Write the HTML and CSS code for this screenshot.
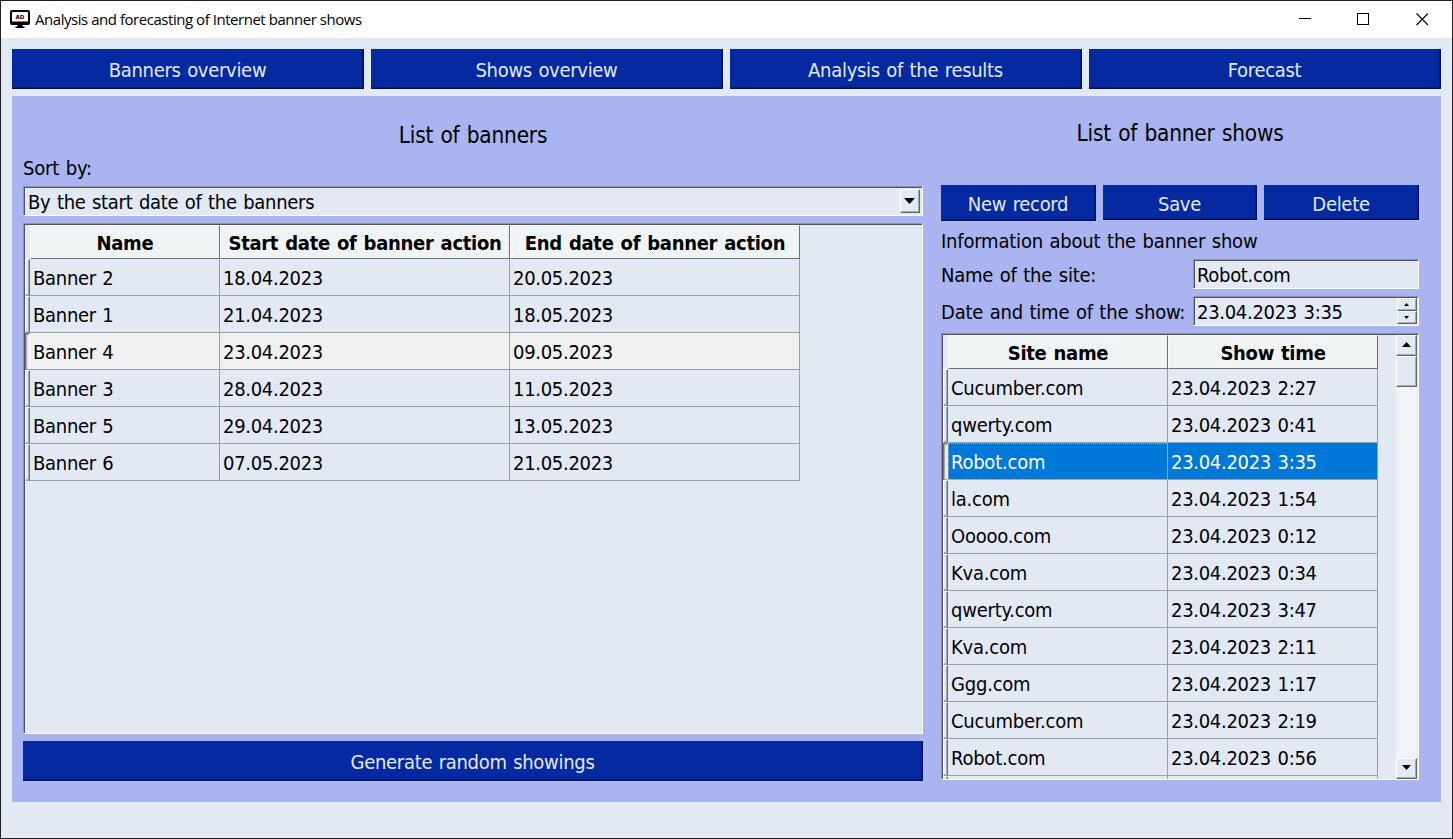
FILE: index.html
```html
<!DOCTYPE html>
<html lang="en">
<head>
<meta charset="utf-8">
<title>Analysis and forecasting of Internet banner shows</title>
<link rel="stylesheet" href="styles.css">
</head>
<body>
<div class="window">
  <header class="titlebar">
    <svg class="app-icon" width="20" height="19" viewBox="0 0 20 19">
      <rect x="1" y="1" width="18" height="13" rx="1" fill="#fff" stroke="#000" stroke-width="2"/>
      <path d="M1 11.500h18V14H1zM7.500 14h5v2.500h-5zM5.500 16.500h9v1.500h-9z" fill="#000"/>
      <text class="icon-text" x="10" y="8.600" text-anchor="middle">AD</text>
    </svg>
    <span class="title">Analysis and forecasting of Internet banner shows</span>
    <svg class="controls" width="142" height="37" viewBox="0 0 142 37" fill="none" stroke="#000" shape-rendering="crispEdges">
      <path d="M-1 17.500h12"/>
      <rect x="57.500" y="12.500" width="11" height="11"/>
      <path d="M116.500 12.500l11.500 11.500M128 12.500L116.500 24" shape-rendering="auto" stroke-width="1.100"/>
    </svg>
  </header>

  <nav class="tabs">
    <button class="btn">Banners overview</button>
    <button class="btn">Shows overview</button>
    <button class="btn">Analysis of the results</button>
    <button class="btn">Forecast</button>
  </nav>

  <main class="panel">
    <section class="banners">
      <h1 class="heading">List of banners</h1>
      <div class="sort-label">Sort by:</div>
      <div class="combo sunken">
        <span class="field-text">By the start date of the banners</span>
        <span class="drop raised"><svg width="11" height="6"><path d="M0 0h11L5.500 6z"/></svg></span>
      </div>
      <div class="table sunken">
        <div class="grid banners-grid">
          <div class="corner"></div><div class="th">Name</div><div class="th">Start date of banner action</div><div class="th">End date of banner action</div>
          <div class="ind"></div><div class="td">Banner 2</div><div class="td">18.04.2023</div><div class="td">20.05.2023</div>
          <div class="ind"></div><div class="td">Banner 1</div><div class="td">21.04.2023</div><div class="td">18.05.2023</div>
          <div class="ind pressed"></div><div class="td current">Banner 4</div><div class="td current">23.04.2023</div><div class="td current">09.05.2023</div>
          <div class="ind"></div><div class="td">Banner 3</div><div class="td">28.04.2023</div><div class="td">11.05.2023</div>
          <div class="ind"></div><div class="td">Banner 5</div><div class="td">29.04.2023</div><div class="td">13.05.2023</div>
          <div class="ind"></div><div class="td">Banner 6</div><div class="td">07.05.2023</div><div class="td">21.05.2023</div>
        </div>
      </div>
      <button class="btn generate">Generate random showings</button>
    </section>

    <section class="shows">
      <h1 class="heading">List of banner shows</h1>
      <div class="actions">
        <button class="btn first">New record</button>
        <button class="btn">Save</button>
        <button class="btn">Delete</button>
      </div>
      <div class="info">Information about the banner show</div>
      <div class="form-row">
        <span>Name of the site:</span>
        <div class="input sunken"><span class="field-text">Robot.com</span></div>
      </div>
      <div class="form-row second">
        <span>Date and time of the show:</span>
        <div class="input sunken">
          <span class="field-text">23.04.2023 3:35</span>
          <span class="spin">
            <span class="raised"><svg width="5" height="3"><path d="M0 3h5L2.500 0z"/></svg></span>
            <span class="raised"><svg width="5" height="3"><path d="M0 0h5L2.500 3z"/></svg></span>
          </span>
        </div>
      </div>
      <div class="table sunken shows-table">
        <div class="grid shows-grid">
          <div class="corner"></div><div class="th">Site name</div><div class="th">Show time</div>
          <div class="ind"></div><div class="td name">Cucumber.com</div><div class="td">23.04.2023 2:27</div>
          <div class="ind"></div><div class="td name">qwerty.com</div><div class="td">23.04.2023 0:41</div>
          <div class="ind pressed"></div><div class="td name selected focused">Robot.com</div><div class="td selected">23.04.2023 3:35</div>
          <div class="ind"></div><div class="td name">la.com</div><div class="td">23.04.2023 1:54</div>
          <div class="ind"></div><div class="td name">Ooooo.com</div><div class="td">23.04.2023 0:12</div>
          <div class="ind"></div><div class="td name">Kva.com</div><div class="td">23.04.2023 0:34</div>
          <div class="ind"></div><div class="td name">qwerty.com</div><div class="td">23.04.2023 3:47</div>
          <div class="ind"></div><div class="td name">Kva.com</div><div class="td">23.04.2023 2:11</div>
          <div class="ind"></div><div class="td name">Ggg.com</div><div class="td">23.04.2023 1:17</div>
          <div class="ind"></div><div class="td name">Cucumber.com</div><div class="td">23.04.2023 2:19</div>
          <div class="ind"></div><div class="td name">Robot.com</div><div class="td">23.04.2023 0:56</div>
          <div class="ind"></div><div class="td"></div><div class="td"></div>
        </div>
        <div class="scrollbar">
          <span class="raised arrow"><svg width="9" height="5"><path d="M0 5h9L4.500 0z"/></svg></span>
          <span class="raised thumb"></span>
          <span class="raised arrow down"><svg width="9" height="5"><path d="M0 0h9L4.500 5z"/></svg></span>
        </div>
      </div>
    </section>
  </main>
</div>
</body>
</html>
```
FILE: styles.css
```css
* { box-sizing: border-box; }

body {
  margin: 0;
  color: #000;
  font: 20px/24px "DejaVu Sans Condensed", "DejaVu Sans", sans-serif;
  font-stretch: condensed;
  letter-spacing: -0.3px;
  word-spacing: 1.1px;
  white-space: nowrap;
}

.window {
  width: 1453px;
  height: 839px;
  border: 1px solid #202024;
  background: #e3e9f3;
  overflow: hidden;
}

.titlebar {
  display: flex;
  align-items: center;
  height: 37px;
  padding-left: 9px;
  background: #fff;
}
.app-icon { flex: none; }
.icon-text { font: bold 5.5px "DejaVu Sans", sans-serif; letter-spacing: 0; }
.title {
  margin-left: 5px;
  padding-bottom: 2px;
  font: 15px/20px "Open Sans", sans-serif;
  letter-spacing: -0.46px;
  word-spacing: 0;
}
.controls { margin-left: auto; margin-right: 10px; overflow: visible; }

.tabs {
  display: grid;
  grid-template-columns: repeat(4, 352px);
  gap: 7px;
  padding: 11px 11px 7px;
}

.btn {
  display: flex;
  align-items: center;
  justify-content: center;
  height: 40px;
  margin: 0;
  padding: 2px 1px 0 0;
  border: 0;
  background: #0429a0;
  box-shadow: inset -1px -1px #020f4a, inset -2px -2px #031b76;
  color: #e3e9f3;
  font: inherit;
  letter-spacing: inherit;
  word-spacing: inherit;
}

.panel {
  display: flex;
  gap: 18px;
  height: 706px;
  margin: 0 11px;
  padding: 0 22px 0 11px;
  background: #a9b4f0;
}
.banners { display: flex; flex-direction: column; width: 900px; }
.shows { display: flex; flex-direction: column; width: 478px; }

.heading {
  margin: 0;
  padding-top: 25px;
  font-size: 22.4px;
  font-weight: normal;
  line-height: 28px;
  letter-spacing: -0.2px;
  text-align: center;
}
.sort-label { padding-top: 7px; height: 37px; letter-spacing: -0.2px; }

.sunken {
  border: 1px solid;
  border-color: #8e93a8 #fff #fff #8e93a8;
  background: #e3e9f3;
  box-shadow: inset 1px 1px #50535b;
}
.raised {
  display: flex;
  align-items: center;
  justify-content: center;
  border: 1px solid;
  border-color: #fff #62656b #62656b #fff;
  background: #e3e9f3;
  box-shadow: inset -1px -1px #a6aab3;
}
.raised svg { margin-right: 1px; }

.combo { display: flex; height: 30px; padding: 2px; }
.field-text { flex: 1; align-self: center; padding: 1px 0 0 2px; }
.drop { width: 20px; height: 24px; }

.table {
  display: flex;
  justify-content: space-between;
  height: 511px;
  margin-top: 7px;
  padding: 1px 0 0 1px;
  overflow: hidden;
}
.grid {
  display: grid;
  grid-template-rows: 34px;
  grid-auto-rows: 37px;
}
.banners-grid { grid-template-columns: 5px 190px 290px 290px; }
.shows-grid { grid-template-columns: 5px 220px 210px; }

.th {
  display: flex;
  align-items: center;
  justify-content: center;
  padding-top: 2px;
  border: 1px solid;
  border-color: #fff #6c6f75 #6c6f75 #fff;
  background: repeating-conic-gradient(#e3ebee 0 25%, #fff 0 50%) 0 0 / 2px 2px;
  font-weight: bold;
}
.td {
  padding: 7px 0 0 3px;
  border: solid #9a9ea6;
  border-width: 0 1px 1px 0;
}
.name { letter-spacing: -0.22px; }
.ind {
  border: 1px solid;
  border-color: #fff #6c6f75 #9a9ea6 #fff;
  box-shadow: inset -1px -1px #a6aab3;
}
.ind.pressed {
  border-color: #6c6f75 #fff #9a9ea6 #6c6f75;
  box-shadow: inset 1px 1px #a6aab3;
}
.current { background: #f0f0f0; }
.selected { background: #0078d7 padding-box; color: #fff; }
.focused {
  z-index: 1;
  outline: 1px dotted #e0a878;
  outline-offset: -1px;
}

.generate { margin-top: 7px; }

.shows .heading { padding-top: 23px; }
.actions {
  display: grid;
  grid-template-columns: 155px 154px 155px;
  gap: 7px;
  margin-top: 38px;
}
.actions .btn { height: 35px; }
.actions .first { height: 36px; padding-bottom: 1px; }
.info { padding-top: 8px; height: 38px; letter-spacing: -0.2px; }
.form-row {
  display: flex;
  justify-content: space-between;
  height: 30px;
  line-height: 32px;
  letter-spacing: -0.22px;
}
.second { margin-top: 7px; }
.input {
  display: flex;
  width: 226px;
  padding: 1px;
  line-height: 24px;
  letter-spacing: -0.3px;
}
.spin { width: 20px; }
.spin .raised { height: 13px; }

.shows-table { height: 447px; }
.scrollbar {
  display: flex;
  flex-direction: column;
  width: 21px;
  margin-right: 1px;
  background: repeating-conic-gradient(#e3e9ee 0 25%, #fff 0 50%) 0 0 / 2px 2px;
}
.arrow { height: 21px; padding-bottom: 2px; }
.thumb { height: 31px; }
.down { margin-top: auto; }
```
